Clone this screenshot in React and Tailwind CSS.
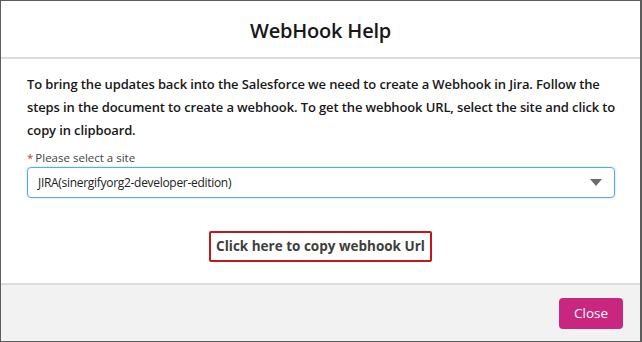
import React from 'react'

const App = () => {
  return (
    <div className="w-[642px] h-[342px] bg-white border border-[#5c5c5c] border-r-2 flex flex-col" style={{ fontFamily: '"Open Sans", "Noto Sans", sans-serif' }}>
      {/* header */}
      <div className="h-[58px] flex items-center justify-center border-b-2 border-[#dcdcdc] shrink-0">
        <h2 className="text-[20px] font-semibold text-[#181818] tracking-[-0.2px] pt-[4px]">WebHook Help</h2>
      </div>

      {/* body */}
      <div className="flex-1 pl-[26px] pr-[22px] pt-[14px]">
        <p className="text-[13px] font-semibold leading-[23px] text-[#181818] tracking-[-0.12px]">
          To bring the updates back into the Salesforce we need to create a Webhook in Jira. Follow the steps in the document to create a webhook. To get the webhook URL, select the site and click to copy in clipboard.
        </p>

        <div className="mt-[8px]">
          <label className="text-[11.5px] text-[#444] leading-[16px] block">
            <span className="text-[#c23934] mr-[2px]">*</span>Please select a site
          </label>
          <div className="mt-[1px] h-[31px] w-[588px] border border-[#5fa8e8] rounded-[4px] shadow-[0_0_2px_#9cd0ff] flex items-center justify-between pl-[10px] pr-[12px]">
            <span className="text-[12px] text-[#222] tracking-[-0.3px]">JIRA(sinergifyorg2-developer-edition)</span>
            <svg width="12" height="8" viewBox="0 0 12 8"><path d="M0 0 L12 0 L6 7 Z" fill="#6b6b6b" /></svg>
          </div>
        </div>

        <div className="flex justify-center mt-[33px] pr-[4px]">
          <button className="h-[31px] px-[5px] border-2 border-[#c4161c] rounded-[2px] text-[13.5px] font-bold text-[#3e3e3c]">
            Click here to copy webhook Url
          </button>
        </div>
      </div>

      {/* footer */}
      <div className="h-[58px] bg-[#f3f2f2] border-t-2 border-[#dcdcdc] flex items-center justify-end pr-[17px] shrink-0">
        <button className="w-[64px] h-[31px] rounded-[4px] bg-[#c9267f] text-white text-[13.5px]">Close</button>
      </div>
    </div>
  )
}

export default App
